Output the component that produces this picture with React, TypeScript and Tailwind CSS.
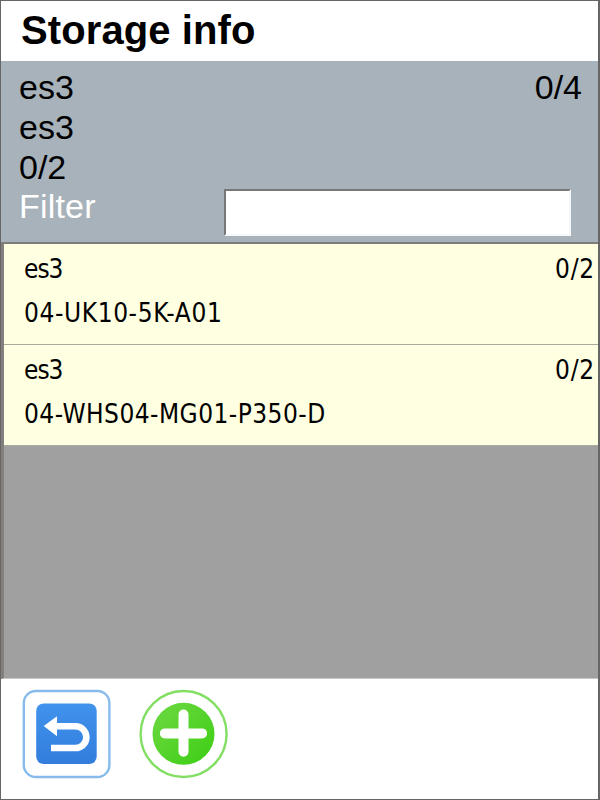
const rows = [
  { id: 'es3', count: '0/2', code: '04-UK10-5K-A01', spacing: 'tracking-[0.6px]' },
  { id: 'es3', count: '0/2', code: '04-WHS04-MG01-P350-D', spacing: 'tracking-[0.45px]' },
];

function BackIcon() {
  return (
    <svg width="90" height="90" viewBox="0 0 90 90" aria-hidden="true">
      <defs>
        <linearGradient id="blue" x1="0" y1="0" x2="0" y2="1">
          <stop offset="0" stopColor="#4193ec" />
          <stop offset="1" stopColor="#327ddd" />
        </linearGradient>
      </defs>
      <rect x="1.8" y="2" width="85.6" height="86" rx="12" fill="#fff" stroke="#86bbec" strokeWidth="2.4" />
      <rect x="14.2" y="14.4" width="60.5" height="60.7" rx="7.5" fill="url(#blue)" />
      <path d="M33 37.3H53.5A10.85 10.85 0 0 1 53.5 59H29" fill="none" stroke="#fff" strokeWidth="6.6" />
      <path d="M21.7 37L35 27.2V47.2Z" fill="#fff" />
    </svg>
  );
}

function AddIcon() {
  return (
    <svg width="90" height="90" viewBox="0 0 90 90" aria-hidden="true">
      <defs>
        <linearGradient id="green" x1="0" y1="0" x2="1" y2="1">
          <stop offset="0" stopColor="#6ad943" />
          <stop offset="0.3" stopColor="#60d535" />
          <stop offset="1" stopColor="#3bcf13" />
        </linearGradient>
      </defs>
      <circle cx="44.6" cy="45" r="43" fill="#fff" stroke="#83df63" strokeWidth="2.4" />
      <circle cx="44.5" cy="44.8" r="31" fill="url(#green)" />
      <path d="M44.5 25.5V62.7M25.9 44.4H63.1" fill="none" stroke="#fff" strokeWidth="10" strokeLinecap="round" />
    </svg>
  );
}

export default function App() {
  return (
    <div className="flex h-[800px] w-[600px] flex-col border border-r-2 border-[#666] bg-white font-['Liberation_Sans',Arial,sans-serif] text-black">
      <header className="h-[60px] pt-[5px] pl-5 text-[40px] leading-[48px] font-bold tracking-[0.1px] whitespace-nowrap">Storage info</header>
      <section className="h-[181px] bg-[#a8b2ba] pt-[6px] pr-4 pl-[18px] text-[34px] leading-[40px]">
        <div className="flex justify-between">
          <span>es3</span>
          <span>0/4</span>
        </div>
        <div>es3</div>
        <div>0/2</div>
        <div className="flex justify-between">
          <label htmlFor="filter" className="-mt-px tracking-[0.2px] text-white">Filter</label>
          <input
            id="filter"
            className="mt-[2px] mr-[11px] h-[47px] w-[347px] border-2 border-t-[#777] border-r-[#f5f7f8] border-b-[#f5f7f8] border-l-[#777] bg-white px-2 text-2xl outline-none"
          />
        </div>
      </section>
      <main className="h-[437px] border-t-2 border-l-3 border-b border-t-[#7d7d79] border-b-[#c8c8c8] border-l-[#827f7d] bg-[#a0a0a0] font-['DejaVu_Sans_Condensed','DejaVu_Sans',sans-serif] text-[26px]">
        {rows.map((row) => (
          <div key={row.code} className="h-[101px] border-b border-[#aaa99b] bg-[#ffffe1] pt-1 pr-[3px] pl-5">
            <div className="flex justify-between leading-[43px]">
              <span className="tracking-[-1px]">es3</span>
              <span className="tracking-[0.8px]">{row.count}</span>
            </div>
            <div className={`leading-[44px] whitespace-nowrap ${row.spacing}`}>{row.code}</div>
          </div>
        ))}
      </main>
      <footer className="flex gap-[27px] pt-[10px] pl-[21px]">
        <button type="button" aria-label="Back"><BackIcon /></button>
        <button type="button" aria-label="Add"><AddIcon /></button>
      </footer>
    </div>
  );
}
